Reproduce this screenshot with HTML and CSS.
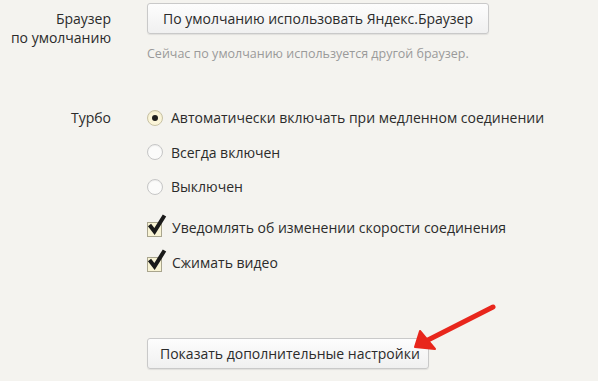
FILE: index.html
```html
<!DOCTYPE html>
<html lang="ru">
<head>
  <meta charset="UTF-8">
  <meta name="viewport" content="width=device-width, initial-scale=1.0">
  <title>Настройки</title>
  <link rel="stylesheet" href="styles.css">
</head>
<body>
  <div class="settings">
    <div class="row row-browser">
      <div class="label">Браузер<br>по умолчанию</div>
      <div class="controls">
        <button class="btn btn-default">По умолчанию использовать Яндекс.Браузер</button>
        <div class="hint">Сейчас по умолчанию используется другой браузер.</div>
      </div>
    </div>

    <div class="row row-turbo">
      <div class="label">Турбо</div>
      <div class="controls">
        <label class="option"><span class="radio checked"></span>Автоматически включать при медленном соединении</label>
        <label class="option"><span class="radio"></span>Всегда включен</label>
        <label class="option"><span class="radio"></span>Выключен</label>
        <label class="option check-option">
          <span class="checkbox">
            <svg viewBox="0 0 20 22" width="20" height="22"><path d="M2.5 12 L7.5 18.5 L17.5 2.5" fill="none" stroke="#1a1a1a" stroke-width="4" stroke-linejoin="miter"/></svg>
          </span>Уведомлять об изменении скорости соединения</label>
        <label class="option check-option">
          <span class="checkbox">
            <svg viewBox="0 0 20 22" width="20" height="22"><path d="M2.5 12 L7.5 18.5 L17.5 2.5" fill="none" stroke="#1a1a1a" stroke-width="4" stroke-linejoin="miter"/></svg>
          </span>Сжимать видео</label>
      </div>
    </div>

    <div class="row row-more">
      <div class="label"></div>
      <div class="controls">
        <button class="btn btn-more">Показать дополнительные настройки</button>
      </div>
    </div>
  </div>

  <svg class="arrow" width="598" height="381" viewBox="0 0 598 381">
    <path d="M493 307 L426 341" stroke="#e8261c" stroke-width="5" stroke-linecap="round"/>
    <path d="M415 347 L420 331 L435 349 Z" fill="#e8261c" stroke="#e8261c" stroke-width="2" stroke-linejoin="round"/>
  </svg>
</body>
</html>
```

FILE: styles.css
```css
body {
  margin: 0;
  background: #f4f3ef;
  font-family: "Open Sans", Arial, sans-serif;
  font-size: 14px;
  color: #2b2b2b;
  position: relative;
  height: 381px;
  overflow: hidden;
}
.settings { padding-top: 3px; }
.row { display: flex; }
.label {
  width: 111px;
  text-align: right;
  margin-right: 36px;
  line-height: 19px;
  flex: none;
}
.controls { display: flex; flex-direction: column; align-items: flex-start; }

.row-browser .label { padding-top: 6px; }

.btn {
  font-family: inherit;
  font-size: 14px;
  color: #2b2b2b;
  background: linear-gradient(#fdfdfd, #f0f0f0);
  border: 1px solid #c9c9c9;
  border-radius: 3px;
  box-shadow: 0 1px 1px rgba(0, 0, 0, 0.08);
  padding: 0 14px;
  height: 31px;
  white-space: nowrap;
  cursor: pointer;
}
.btn-default { width: 342px; }
.hint { font-size: 12.5px; color: #9a9a9a; margin-top: 11px; line-height: 17px; }

.row-turbo { margin-top: 46px; }
.option {
  display: flex;
  align-items: center;
  height: 19px;
  margin-bottom: 15.5px;
  cursor: pointer;
}
.radio {
  width: 14px;
  height: 14px;
  border: 1px solid #c6c6c6;
  border-radius: 50%;
  background: #fbfbfa;
  box-shadow: inset 0 1px 1px rgba(0, 0, 0, 0.06);
  margin-right: 8px;
  display: flex;
  align-items: center;
  justify-content: center;
  flex: none;
}
.radio.checked { background: #fbf5d8; border-color: #c8c2a4; }
.radio.checked::after {
  content: "";
  width: 6px;
  height: 6px;
  border-radius: 50%;
  background: #1f1f1f;
}
.check-option { margin-top: 6px; margin-bottom: 15px; }
.check-option + .check-option { margin-top: 1px; }
.checkbox {
  width: 13px;
  height: 13px;
  border: 1px solid #a9a58e;
  background: #f8f3d4;
  margin-right: 10px;
  position: relative;
  flex: none;
  top: 2px;
}
.checkbox svg { position: absolute; left: -1px; top: -10px; }

.row-more { margin-top: 51px; }
.btn-more { height: 31px; padding: 0 12px; width: 282px; }

.arrow { position: absolute; left: 0; top: 0; pointer-events: none; }
```
